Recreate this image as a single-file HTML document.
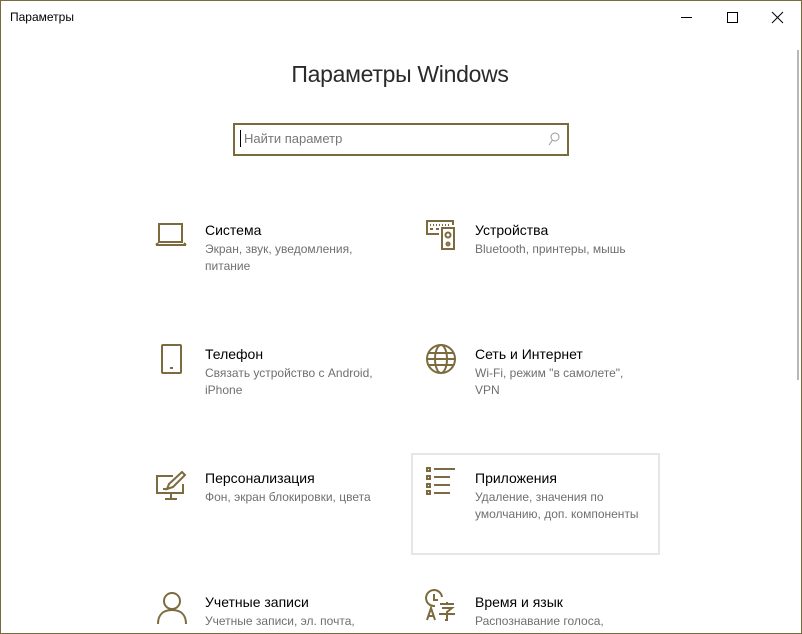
<!DOCTYPE html>
<html><head><meta charset="utf-8">
<style>
html,body{margin:0;padding:0;}
body{width:802px;height:634px;position:relative;overflow:hidden;background:#fff;font-family:"Liberation Sans","DejaVu Sans",sans-serif;}
.frame{position:absolute;left:0;top:0;width:800px;height:632px;border:1px solid #7a6a3c;}
.abs{position:absolute;}
.t{position:absolute;font-size:14px;color:#000;white-space:nowrap;}
.d{position:absolute;font-size:12px;color:#6f6f6f;line-height:17px;}
svg{position:absolute;overflow:visible;}
svg *{fill:none;stroke:#7d6b3f;stroke-width:2;}
</style></head><body>
<div class="frame"></div>
<div class="abs" style="left:10px;top:10px;font-size:12px;color:#000;">Параметры</div>
<div class="abs" style="left:681px;top:17px;width:11px;height:1px;background:#000;"></div>
<div class="abs" style="left:727px;top:12px;width:9px;height:9px;border:1px solid #000;"></div>
<svg style="left:772px;top:12px" width="11" height="11"><path d="M0 0L11 11M11 0L0 11" style="stroke:#000;stroke-width:1"/></svg>
<div class="abs" style="left:797px;top:50px;width:2px;height:330px;background:#b8b8b8;"></div>

<div class="abs" style="left:0;width:800px;top:61px;text-align:center;font-size:23px;color:#2a2a2a;letter-spacing:-0.3px;">Параметры Windows</div>

<div class="abs" style="left:233px;top:123px;width:332px;height:29px;border:2px solid #7a6a3c;"></div>
<div class="abs" style="left:240px;top:130px;width:1px;height:17px;background:#000;"></div>
<div class="abs" style="left:244px;top:131px;font-size:13px;color:#777;">Найти параметр</div>
<svg style="left:548px;top:132px" width="12" height="14"><circle cx="7" cy="5" r="4" style="stroke:#999;stroke-width:1"/><path d="M4.5 8L1 13" style="stroke:#999;stroke-width:1"/></svg>

<div class="abs" style="left:411px;top:453px;width:245px;height:98px;border:2px solid #e6e6e6;"></div>

<svg style="left:155px;top:223px" width="32" height="25"><rect x="4" y="1" width="23" height="18"/><path d="M1 22H31"/><path d="M1 22L3 20M31 22L29 20"/></svg>
<div class="t" style="left:205px;top:222px;">Система</div>
<div class="d" style="left:205px;top:241px;">Экран, звук, уведомления,<br>питание</div>

<svg style="left:425px;top:219px" width="32" height="32"><path d="M14 15H2V2H28V6"/><path d="M5 6h1M8 6h1M11 6h1M14 6h1M17 6h1M20 6h1M23 6h1M5 10h3M11 10h3"/><rect x="17" y="9" width="12" height="21"/><circle cx="23" cy="16" r="2.5"/><circle cx="23" cy="25" r="1.5"/></svg>
<div class="t" style="left:475px;top:222px;">Устройства</div>
<div class="d" style="left:475px;top:241px;">Bluetooth, принтеры, мышь</div>

<svg style="left:161px;top:344px" width="22" height="30"><rect x="1" y="1" width="19" height="28" rx="1"/><path d="M9 24h3"/></svg>
<div class="t" style="left:205px;top:346px;">Телефон</div>
<div class="d" style="left:205px;top:365px;">Связать устройство с Android,<br>iPhone</div>

<svg style="left:426px;top:344px" width="30" height="30"><circle cx="15" cy="15" r="14"/><ellipse cx="15" cy="15" rx="6" ry="14"/><path d="M1 15H29M3 9H27M3 21H27"/></svg>
<div class="t" style="left:475px;top:346px;">Сеть и Интернет</div>
<div class="d" style="left:475px;top:365px;">Wi-Fi, режим "в самолете",<br>VPN</div>

<svg style="left:155px;top:470px" width="32" height="31"><path d="M18 6H2V23H28V14"/><path d="M10 29H22M16 23V29"/><path d="M12 19L14 14L27 2L30 5L18 17Z"/><path d="M8 19H13"/></svg>
<div class="t" style="left:205px;top:470px;">Персонализация</div>
<div class="d" style="left:205px;top:489px;">Фон, экран блокировки, цвета</div>

<svg style="left:426px;top:467px" width="30" height="28"><rect x="1" y="1" width="3" height="3"/><rect x="1" y="9" width="3" height="3"/><rect x="1" y="17" width="3" height="3"/><rect x="1" y="24" width="3" height="3"/><path d="M8 2H29M8 10H24M8 18H24M8 26H24"/></svg>
<div class="t" style="left:475px;top:470px;">Приложения</div>
<div class="d" style="left:475px;top:489px;">Удаление, значения по<br>умолчанию, доп. компоненты</div>

<svg style="left:157px;top:592px" width="30" height="32"><circle cx="15" cy="9" r="8"/><path d="M1 32C1 22 7 18 15 18C23 18 29 22 29 32"/></svg>
<div class="t" style="left:205px;top:594px;">Учетные записи</div>
<div class="d" style="left:205px;top:613px;">Учетные записи, эл. почта,</div>

<svg style="left:425px;top:590px" width="32" height="32"><path d="M10 16A8 8 0 1 1 17 7"/><path d="M9 4V10H13"/><path d="M2 30L6 18L10 30M3.5 26H8.5"/><path d="M15 14H29M22 12V14M17 18H27L22 22V30L20 30M14 24H30"/></svg>
<div class="t" style="left:475px;top:594px;">Время и язык</div>
<div class="d" style="left:475px;top:613px;">Распознавание голоса,</div>
</body></html>
